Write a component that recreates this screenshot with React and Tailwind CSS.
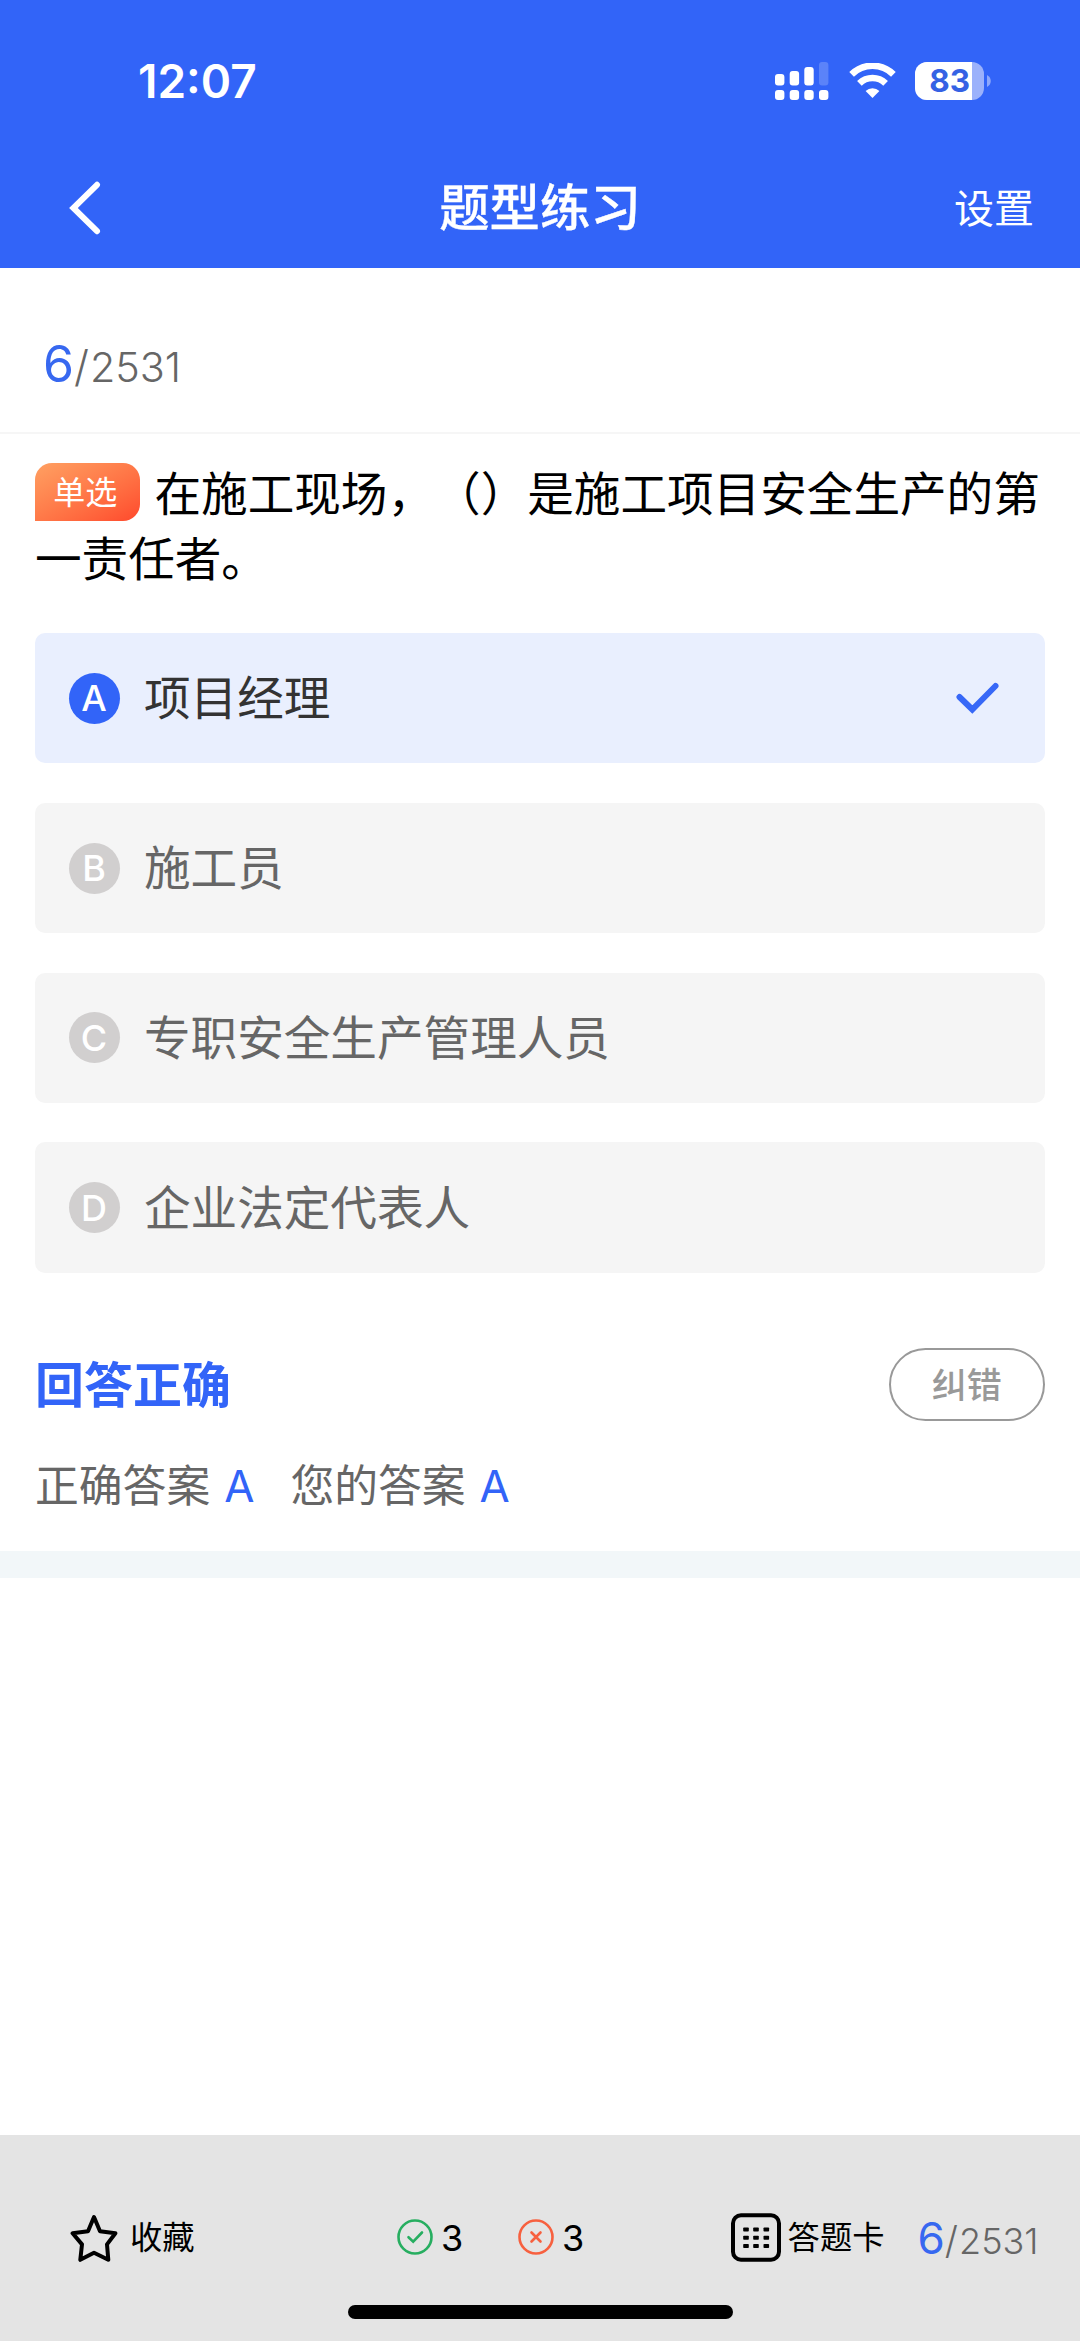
const OPTIONS = [
  { key: 'A', label: '项目经理',           selected: true  },
  { key: 'B', label: '施工员',             selected: false },
  { key: 'C', label: '专职安全生产管理人员', selected: false },
  { key: 'D', label: '企业法定代表人',       selected: false },
]

// Cellular strength: upper row of bars, lower row of dots (dual SIM)
function SignalIcon() {
  return (
    <svg width="54" height="38" viewBox="0 0 54 38" fill="#fff">
      <rect x="0"    y="12" width="9.4" height="11.4" rx="3" />
      <rect x="14.7" y="9"  width="9.4" height="14.4" rx="3" />
      <rect x="29.3" y="5"  width="9.4" height="18.4" rx="3" />
      <rect x="44"   y="0"  width="9.4" height="23.4" rx="3" opacity="0.2" />
      <rect x="0"    y="28" width="9.4" height="10" rx="3" />
      <rect x="14.7" y="28" width="9.4" height="10" rx="3" />
      <rect x="29.3" y="28" width="9.4" height="10" rx="3" />
      <rect x="44"   y="28" width="9.4" height="10" rx="3" />
    </svg>
  )
}

function WifiIcon() {
  return (
    <svg width="47" height="36" viewBox="0 0 47 36" fill="none" stroke="#fff">
      <path d="M2.6 11.4 A29.6 29.6 0 0 1 44.4 11.4" strokeWidth="6.6" />
      <path d="M10.4 20.4 A18.6 18.6 0 0 1 36.6 20.4" strokeWidth="6.6" />
      <path d="M16.6 28 A10.2 10.2 0 0 1 30.4 28 L23.5 35 Z" fill="#fff" stroke="none" />
    </svg>
  )
}

function Battery() {
  return (
    <div className="flex items-center gap-[3px]">
      <div className="flex h-[38px] w-[69px] overflow-hidden rounded-[12px] bg-[#9bb1fb]">
        <div className="flex w-[57px] items-center justify-end bg-white pr-[2px] text-[31.5px] leading-[38px] font-bold text-[#3562e4]">
          83
        </div>
      </div>
      <svg width="4" height="12" viewBox="0 0 4 12" fill="#8ea8fb">
        <path d="M0 0 C5 2.5 5 9.5 0 12 Z" />
      </svg>
    </div>
  )
}

function Header() {
  return (
    <header className="h-[268.3px] bg-[#3264f8] text-white">
      <div className="flex h-[160px] items-center justify-between pt-px pr-[89px] pl-[138px]">
        <span className="text-[46px] leading-[46px] font-semibold">12:07</span>
        <div className="flex items-center">
          <SignalIcon />
          <div className="ml-[20px] flex"><WifiIcon /></div>
          <div className="ml-[19px]"><Battery /></div>
        </div>
      </div>
      <div className="grid h-[96px] grid-cols-3 items-center pr-[46px] pl-[69px]">
        <svg width="32" height="54" viewBox="0 0 32 54" fill="none" stroke="#fff" strokeWidth="6" strokeLinecap="round">
          <path d="M28 3.8 L4.4 27 L28 50.2" />
        </svg>
        <h1 className="-ml-[23px] text-center text-[50.4px] leading-[60px] font-medium [-webkit-text-stroke:0.3px_#fff]">题型练习</h1>
        <span className="pt-[1px] text-right text-[40px] leading-[48px]">设置</span>
      </div>
    </header>
  )
}

function Option({ option }) {
  const { key, label, selected } = option
  return (
    <div className={`flex h-[130.5px] items-center rounded-[10px] pr-[46px] pl-[33.5px] ${selected ? 'bg-[#e9effe]' : 'bg-[#f5f5f5]'}`}>
      <div className={`flex size-[51px] items-center justify-center rounded-full text-[36px] leading-none font-medium text-white ${selected ? 'bg-[#3264f8]' : 'bg-[#d1cfcf]'}`}>
        {key}
      </div>
      <span className={`ml-[24.5px] text-[46.6px] leading-[60px] ${selected ? 'text-[#333]' : 'text-[#666]'}`}>
        {label}
      </span>
      {selected && (
        <svg className="ml-auto" width="43" height="32" viewBox="0 0 43 32" fill="none" stroke="#3768f7" strokeWidth="6" strokeLinecap="round">
          <path d="M3.5 15 L16.3 27.5 L39.5 4" />
        </svg>
      )}
    </div>
  )
}

function Result() {
  return (
    <section className="px-[35px] pt-[75px]">
      <div className="flex h-[73.5px] items-center justify-between">
        <h2 className="pt-[2px] text-[49px] leading-[60px] font-bold text-[#3264f8]">回答正确</h2>
        <button className="h-[73.5px] w-[156.5px] rounded-full border-[2.5px] border-[#999] pt-[1px] text-[35px] leading-none font-medium text-[#999]">
          纠错
        </button>
      </div>
      <div className="mt-[35.5px] flex h-[60px] items-center text-[43.8px] leading-[60px] text-[#666]">
        <span>正确答案</span>
        <span className="ml-[14px] text-[#3264f8]">A</span>
        <span className="ml-[36px]">您的答案</span>
        <span className="ml-[14px] text-[#3264f8]">A</span>
      </div>
    </section>
  )
}

function BottomBar() {
  return (
    <footer className="flex h-[206.4px] flex-col bg-[#e4e4e4] pt-[72px]">
      <div className="flex h-[62px] items-center text-[32.3px] leading-[40px] text-black">
        <svg className="ml-[70px]" width="48" height="48" viewBox="0 0 48 48" fill="none" stroke="#000" strokeWidth="4" strokeLinejoin="round">
          <path d="M24 3 L30 17.3 L45.4 19.2 L37 30.4 L38.3 45.8 L24 38.8 L10.3 45.8 L12 30.4 L2.6 19.2 L18 17.3 Z" />
        </svg>
        <span className="ml-[12px] pt-px">收藏</span>

        <svg className="-mt-[1px] ml-[202.5px]" width="36" height="36" viewBox="0 0 36 36" fill="none" stroke="#27ae60" strokeWidth="2.6" strokeLinecap="round">
          <circle cx="18" cy="18" r="16.5" />
          <path d="M11.5 18.2 L16.2 22.6 L25 13.5" />
        </svg>
        <span className="ml-[8px] w-[22px] text-[36px]">3</span>
        <svg className="-mt-[1px] ml-[55px]" width="36" height="36" viewBox="0 0 36 36" fill="none" stroke="#f7603f" strokeWidth="2.6" strokeLinecap="round">
          <circle cx="18" cy="18" r="16.5" />
          <path d="M13.5 13.5 L22.5 22.5 M22.5 13.5 L13.5 22.5" />
        </svg>
        <span className="ml-[8px] w-[22px] text-[36px]">3</span>

        <svg className="ml-[146.5px]" width="50" height="49" viewBox="0 0 50 49">
          <rect x="2" y="2.2" width="46" height="44.6" rx="8" fill="none" stroke="#000" strokeWidth="4" />
          {[14.5, 22.7, 31].map(y => [12.2, 22.2, 32.5].map(x => (
            <rect key={`${x}-${y}`} x={x} y={y} width="5.6" height="4" rx="0.8" />
          )))}
        </svg>
        <span className="ml-[7px] pt-px">答题卡</span>
        <div className="ml-[33px] flex items-baseline pt-[4px] font-light text-[#666]">
          <span className="text-[44px] font-normal text-[#3768f0]">6</span>
          <span className="mr-px text-[38px]">/</span>
          <span className="text-[36px]">2531</span>
        </div>
      </div>
      <div className="mx-auto mt-[36px] h-[14px] w-[385px] rounded-full bg-black" />
    </footer>
  )
}

export default function App() {
  return (
    <div className="flex h-[2341px] w-[1080px] flex-col overflow-hidden bg-white font-['Inter','Noto_Sans_CJK_SC',sans-serif]">
      <Header />

      <div className="flex h-[165.3px] items-center border-b-2 border-[#f6f6f6] pl-[43px]">
        <div className="mt-[33px] flex items-baseline font-light text-[#666]">
          <span className="text-[50px] leading-[60px] font-normal text-[#3768f0]">6</span>
          <span className="mr-px text-[43px]">/</span>
          <span className="text-[41.3px]">2531</span>
        </div>
      </div>

      <div className="h-[199.4px] pt-[28px] pl-[35px] text-[46.6px] leading-[65px] text-black [text-spacing-trim:space-all]">
        <span className="float-left mt-[1.5px] mr-[15px] h-[58px] w-[104.5px] rounded-[17px] rounded-bl-none bg-linear-to-br from-[#ffa062] to-[#ff482c] pt-px pr-[4px] text-center text-[32px] leading-[58px] text-white">
          单选
        </span>
        <p>在施工现场，（）是施工项目安全生产的第一责任者。</p>
      </div>

      <div className="flex flex-col gap-[39.3px] px-[35px]">
        {OPTIONS.map(option => <Option key={option.key} option={option} />)}
      </div>

      <Result />
      <div className="mt-[34px] h-[27.5px] bg-[#f2f7f9]" />

      <div className="flex-1" />
      <BottomBar />
    </div>
  )
}
